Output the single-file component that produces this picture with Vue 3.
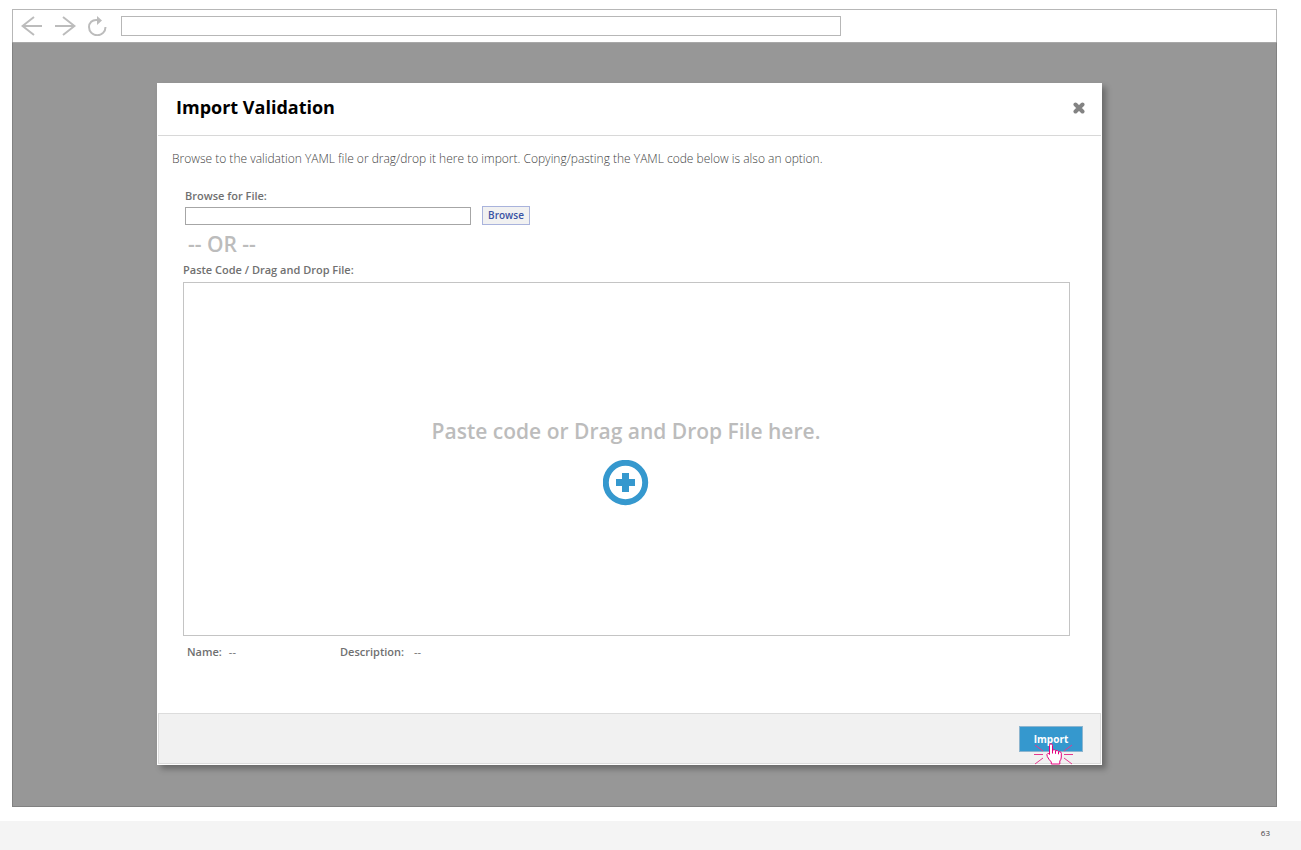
<script setup>
import { ref } from 'vue'

const address = ref('')
const filePath = ref('')
const code = ref('')
</script>

<template>
  <div class="page">
    <div class="browser">
      <div class="toolbar">
        <button class="nav" type="button" aria-label="Back">
          <svg width="22" height="20" viewBox="0 0 22 20"><path d="M21 10H1.500M13 1 1.500 10 13 19" /></svg>
        </button>
        <button class="nav" type="button" aria-label="Forward">
          <svg width="22" height="20" viewBox="0 0 22 20"><path d="M1 10h19.500M9 1l11.500 9L9 19" /></svg>
        </button>
        <button class="nav" type="button" aria-label="Reload">
          <svg width="20" height="20" viewBox="0 0 20 20">
            <path d="M10.500 4C5 3.200 2 7 2 11a8 8 0 0 0 16.500 0" />
            <path class="head" d="M10 0l5 4.500-5 4.500z" />
          </svg>
        </button>
        <input v-model="address" class="address" type="text" aria-label="Address" />
      </div>

      <main class="backdrop">
        <section class="modal" role="dialog" aria-labelledby="dialog-title">
          <header class="modal-head">
            <h1 id="dialog-title">Import Validation</h1>
            <button class="close" type="button" aria-label="Close">
              <svg width="12" height="12" viewBox="0 0 12 12"><path d="M2.500 2.500l7 7M9.500 2.500l-7 7" /></svg>
            </button>
          </header>

          <div class="modal-body">
            <p class="intro">Browse to the validation YAML file or drag/drop it here to import. Copying/pasting the YAML code below is also an option.</p>
            <div class="file">
              <label class="label" for="file-path">Browse for File:</label>
              <div class="file-row">
                <input id="file-path" v-model="filePath" type="text" />
                <button class="browse" type="button">Browse</button>
              </div>
            </div>
            <p class="or">-- OR --</p>
            <div class="paste">
              <label class="label" for="code">Paste Code / Drag and Drop File:</label>
              <div class="drop">
                <textarea id="code" v-model="code"></textarea>
                <div v-if="!code" class="hint">
                  <span>Paste code or Drag and Drop File here.</span>
                  <svg width="46" height="46" viewBox="0 0 46 46">
                    <circle cx="22.500" cy="22.500" r="19.700" />
                    <path d="M13 22.500h19M22.500 13v19" />
                  </svg>
                </div>
              </div>
            </div>
            <dl class="meta">
              <div class="name"><dt>Name:</dt><dd>--</dd></div>
              <div class="description"><dt>Description:</dt><dd>--</dd></div>
            </dl>
          </div>

          <footer class="modal-foot">
            <button class="import" type="button">Import
              <svg class="pointer" width="40" height="24" viewBox="0 0 40 24" aria-hidden="true">
                <path class="rays" d="M1 3l8 6M0 12.500h9M1 22l8-6M38 3l-8 6M39 12.500h-9M38 22l-8-6" />
                <path class="hand" d="M15.500 3.500q0-1.700 1.500-1.700t1.500 1.700V8q2.500-.8 3 .7 2.500-.7 3 1 2.500-.5 2.800 1.500V15q0 2.500-1.500 4v3h-8.500v-2q-2.500-2.500-4-5.500-1-2.500.500-3 1.200-.2 1.700 1z" />
                <path class="fingers" d="M18.500 8v3.500M21.500 8.800v3M24.500 9.800v2.500" />
              </svg>
            </button>
          </footer>
        </section>
      </main>
    </div>
    <footer class="page-foot">63</footer>
  </div>
</template>

<style>
body {
  margin: 0;
  background: #fff;
}
</style>

<style scoped>
* {
  box-sizing: border-box;
}

.page {
  min-height: 100vh;
  display: flex;
  flex-direction: column;
  padding-top: 9px;
  font-family: "Open Sans", "Noto Sans", sans-serif;
  color: #707070;
}

button,
input,
textarea {
  margin: 0;
  padding: 0;
  font-family: inherit;
  border-radius: 0;
}

h1,
p,
dl,
dd {
  margin: 0;
}

svg {
  display: block;
  fill: none;
}

.browser {
  flex: 1;
  display: flex;
  flex-direction: column;
  margin: 0 24px 14px 12px;
}

.toolbar {
  height: 33px;
  display: flex;
  align-items: center;
  gap: 11px;
  padding: 0 435px 0 8px;
  border: 1px solid #b7b7b7;
  border-bottom: 0;
}

.nav {
  border: 0;
  background: none;
}

.nav svg {
  stroke: #bcbcbc;
  stroke-width: 2;
}

.nav .head {
  fill: #bcbcbc;
  stroke: none;
}

.address {
  flex: 1;
  min-width: 0;
  height: 20px;
  margin-left: 3px;
  padding: 0 6px;
  border: 1px solid #b7b7b7;
}

.backdrop {
  flex: 1;
  display: flex;
  padding: 40px 174px 41px 144px;
  background: #979797;
  border: 1px solid #818181;
  border-top-color: #a8a8a8;
}

.modal {
  flex: 1;
  display: flex;
  flex-direction: column;
  padding: 0 1px 1px;
  background: #fff;
  box-shadow: 4px 4px 6px rgba(0, 0, 0, 0.3);
}

.modal-head {
  height: 53px;
  display: flex;
  justify-content: space-between;
  align-items: center;
  padding: 0 16px 4px 18px;
  border-bottom: 1px solid #d8d8d8;
}

h1 {
  font-size: 18px;
  line-height: 24px;
  font-weight: 700;
  color: #000;
}

.close {
  padding-top: 2px;
  border: 0;
  background: none;
}

.close path {
  stroke: #838383;
  stroke-width: 4;
  stroke-linecap: round;
}

.modal-body {
  flex: 1;
  display: flex;
  flex-direction: column;
  padding: 14px 31px 53px 25px;
}

.intro {
  margin-left: -11px;
  font-size: 12px;
  line-height: 18px;
  font-weight: 300;
  color: #444;
}

.file {
  margin: 20px 0 6px 2px;
}

.label {
  display: block;
  font-size: 11px;
  line-height: 16px;
  font-weight: 600;
}

.file-row {
  display: flex;
  gap: 11px;
  align-items: flex-end;
  margin-top: 2px;
}

.file-row input {
  width: 286px;
  height: 18px;
  padding: 0 4px;
  border: 1px solid #a6a6a6;
}

.browse {
  width: 48px;
  height: 19px;
  padding-bottom: 2px;
  font-size: 10px;
  line-height: 14px;
  font-weight: 600;
  color: #3953a4;
  background: #f1f1f1;
  border: 1px solid #a9b3dc;
}

.or {
  margin: 0 0 5px 5px;
  font-size: 21px;
  line-height: 26px;
  font-weight: 600;
  color: #bcbcbc;
}

.paste {
  flex: 1;
  display: flex;
  flex-direction: column;
  gap: 4px;
}

.drop {
  flex: 1;
  display: grid;
}

.drop textarea,
.hint {
  grid-area: 1 / 1;
}

.drop textarea {
  width: 100%;
  padding: 8px;
  resize: none;
  border: 1px solid #c4c4c4;
}

.hint {
  display: flex;
  flex-direction: column;
  align-items: center;
  justify-content: center;
  gap: 14px;
  padding: 4px 1px 0 0;
  pointer-events: none;
  font-size: 21px;
  line-height: 30px;
  font-weight: 600;
  color: #bcbcbc;
}

.hint circle {
  stroke: #3598ce;
  stroke-width: 6;
}

.hint path {
  stroke: #3598ce;
  stroke-width: 7;
}

.meta {
  display: flex;
  margin: 8px 0 0 4px;
  font-size: 11px;
  line-height: 16px;
}

.meta div {
  display: flex;
  gap: 7px;
}

.meta .name {
  width: 153px;
}

.meta .description {
  gap: 10px;
}

dt {
  font-weight: 600;
}

.modal-foot {
  height: 51px;
  display: flex;
  justify-content: flex-end;
  align-items: center;
  padding-right: 17px;
  background: #f1f1f1;
  border: 1px solid #dcdcdc;
}

.import {
  position: relative;
  width: 64px;
  height: 26px;
  font-size: 10px;
  line-height: 24px;
  font-weight: 700;
  color: #fff;
  background: #3598ce;
  border: 1px solid #8db5cf;
}

.pointer {
  position: absolute;
  left: 14px;
  top: 15px;
}

.rays {
  stroke: #e5388e;
}

.hand {
  fill: #fff;
  stroke: #e6007e;
}

.fingers {
  stroke: #e6007e;
}

.page-foot {
  height: 29px;
  padding-right: 31px;
  background: #f4f4f4;
  font-size: 8px;
  line-height: 24px;
  text-align: right;
  color: #444;
}
</style>
